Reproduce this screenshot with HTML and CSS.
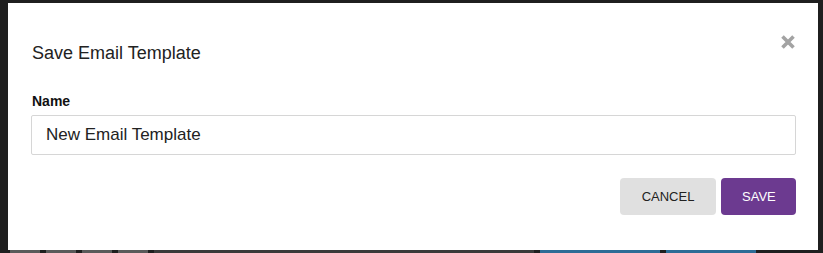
FILE: index.html
```html
<!DOCTYPE html>
<html lang="en">
<head>
    <meta charset="UTF-8">
    <title>Save Email Template</title>
    <link rel="stylesheet" href="styles.css">
</head>
<body>
    <div class="backdrop">
        <div class="modal">
            <div class="modal-header">
                <h4 class="modal-title">Save Email Template</h4>
                <button class="close-btn" aria-label="Close">
                    <svg width="16" height="16" viewBox="0 0 16 16">
                        <path d="M2.5 2.5 L13.5 13.5 M13.5 2.5 L2.5 13.5" stroke="#a3a3a3" stroke-width="3.6" stroke-linecap="butt"/>
                    </svg>
                </button>
            </div>
            <div class="modal-body">
                <label class="field-label" for="tpl-name">Name</label>
                <input id="tpl-name" class="field-input" type="text" value="New Email Template">
            </div>
            <div class="modal-footer">
                <button class="btn btn-cancel">CANCEL</button>
                <button class="btn btn-save">SAVE</button>
            </div>
        </div>
        <div class="page-strip">
            <span class="strip-block grey"></span>
            <span class="strip-block grey"></span>
            <span class="strip-block grey"></span>
            <span class="strip-block grey"></span>
            <span class="strip-block wide"></span>
            <span class="strip-block blue"></span>
            <span class="strip-block blue short"></span>
        </div>
    </div>
</body>
</html>
```

FILE: styles.css
```css
body {
    margin: 0;
    font-family: "Liberation Sans", Arial, sans-serif;
    background: #1f1f1f;
    color: #222;
}

.backdrop {
    width: 823px;
    height: 253px;
    overflow: hidden;
    padding-top: 3px;
    box-sizing: border-box;
}

.modal {
    width: 810px;
    height: 247px;
    margin-left: 8px;
    background: #fff;
    box-sizing: border-box;
    padding: 0 22px 0 23px;
}

.modal-header {
    display: flex;
    justify-content: space-between;
    align-items: flex-start;
    height: 90px;
}

.modal-title {
    margin: 40px 0 0 1px;
    font-size: 18px;
    font-weight: normal;
    color: #222;
}

.close-btn {
    margin-top: 31px;
    padding: 0;
    border: none;
    background: none;
    cursor: pointer;
    line-height: 0;
}

.modal-body {
    display: flex;
    flex-direction: column;
}

.field-label {
    font-size: 14px;
    font-weight: bold;
    color: #111;
    margin-left: 1px;
    margin-bottom: 6px;
}

.field-input {
    height: 40px;
    box-sizing: border-box;
    border: 1px solid #d6d6d6;
    border-radius: 2px;
    padding: 0 14px;
    font-family: "Liberation Sans", Arial, sans-serif;
    font-size: 17px;
    color: #222;
}

.modal-footer {
    display: flex;
    justify-content: flex-end;
    gap: 5px;
    margin-top: 23px;
}

.btn {
    height: 37px;
    padding: 0 21px;
    border: none;
    border-radius: 4px;
    font-family: "Liberation Sans", Arial, sans-serif;
    font-size: 13px;
    cursor: pointer;
}

.btn-cancel {
    background: #e0e0e0;
    color: #222;
    width: 96px;
}

.btn-save {
    background: #6c3a90;
    color: #fff;
    width: 75px;
}

.page-strip {
    display: flex;
    gap: 6px;
    margin: 0 0 0 10px;
    height: 3px;
}

.strip-block {
    width: 30px;
    background: #5a5a5a;
}

.strip-block.wide {
    width: 380px;
    background: #3a3a3a;
}

.strip-block.blue {
    width: 120px;
    background: #2d6c96;
}

.strip-block.short {
    width: 90px;
}
```
